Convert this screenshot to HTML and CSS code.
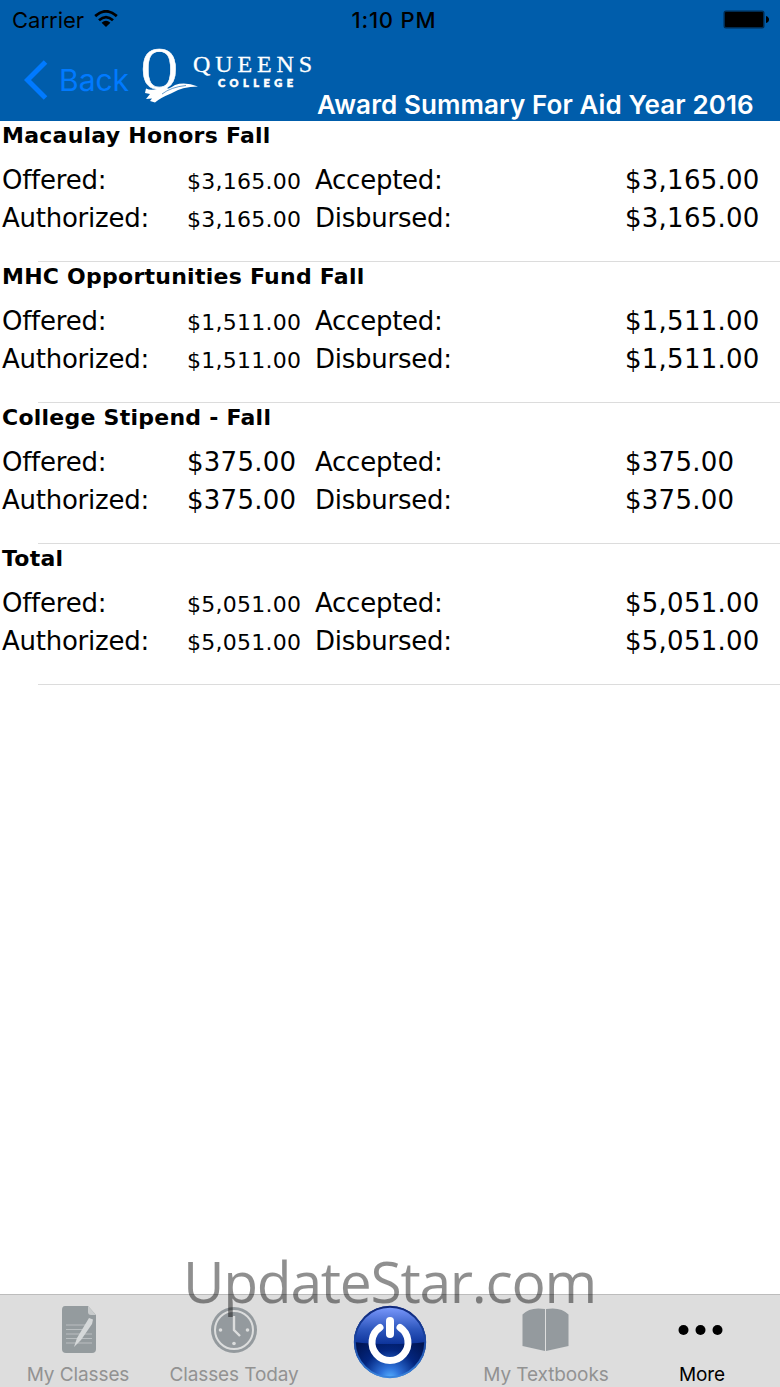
FILE: index.html
```
<!doctype html>
<html lang="en">
<head>
    <meta charset="UTF-8">
    <meta name="viewport" content="width=device-width, initial-scale=1.0">
    <link rel="stylesheet" href="styles.css">
    <title>Award Summary For Aid Year 2016</title>
</head>
<body>
    <header class="top">
        <div class="status">
            <div class="carrier">
                <span>Carrier</span>
                <svg class="wifi" width="24" height="18" viewBox="0 0 24 18">
                    <path d="M1.2 6.1Q12-3.5 22.8 6.1M5 10.2Q12 4 19 10.2" fill="none" stroke="#000" stroke-width="2.8"/>
                    <path d="M12 17L7.6 12.7Q12 9 16.4 12.7Z"/>
                </svg>
            </div>
            <div class="time">1:10 PM</div>
            <svg class="battery" width="46" height="19" viewBox="0 0 46 19">
                <rect x=".5" y=".5" width="41" height="18" rx="2.5" fill="#002b50"/>
                <rect x="2" y="2" width="38" height="15" rx="1"/>
                <path d="M43 6Q46 7 46 9.5T43 13Z"/>
            </svg>
        </div>
        <div class="nav">
            <a class="back">
                <svg width="24" height="40" viewBox="0 0 24 40">
                    <path d="M21.5 2L3.5 20L21.5 38" fill="none" stroke="#007aff" stroke-width="5"/>
                </svg>
                <span>Back</span>
            </a>
            <svg class="logo" width="180" height="70" viewBox="0 0 180 70">
                <text class="logo-q" transform="translate(-1 43.5) scale(.82 1)">Q</text>
                <path class="logo-gap" d="M16 45.5Q25 46 32 40H60V66H16Z"/>
                <path class="logo-swoosh" d="M4 43.5Q9 46 17 43.5Q25 46 33 40Q43 36.5 56 41.5Q40 41.5 29 48.5Q18 53 13 57.5L8 56L10 53.5L4 54L8 49L3 48Z"/>
                <path class="logo-line" d="M20 49Q29 42 44 40.5"/>
                <text class="logo-name" x="51" y="27" textLength="119">QUEENS</text>
                <text class="logo-sub" x="76" y="42" textLength="75">COLLEGE</text>
            </svg>
            <h1>Award Summary For Aid Year 2016</h1>
        </div>
    </header>

    <main class="awards">
        <section class="award">
            <h2>Macaulay Honors Fall</h2>
            <div class="amounts">
                <span class="label">Offered:</span><span class="small">$3,165.00</span>
                <span class="label">Accepted:</span><span>$3,165.00</span>
                <span class="label">Authorized:</span><span class="small">$3,165.00</span>
                <span class="label">Disbursed:</span><span>$3,165.00</span>
            </div>
        </section>
        <section class="award">
            <h2>MHC Opportunities Fund Fall</h2>
            <div class="amounts">
                <span class="label">Offered:</span><span class="small">$1,511.00</span>
                <span class="label">Accepted:</span><span>$1,511.00</span>
                <span class="label">Authorized:</span><span class="small">$1,511.00</span>
                <span class="label">Disbursed:</span><span>$1,511.00</span>
            </div>
        </section>
        <section class="award">
            <h2>College Stipend - Fall</h2>
            <div class="amounts">
                <span class="label">Offered:</span><span>$375.00</span>
                <span class="label">Accepted:</span><span>$375.00</span>
                <span class="label">Authorized:</span><span>$375.00</span>
                <span class="label">Disbursed:</span><span>$375.00</span>
            </div>
        </section>
        <section class="award">
            <h2>Total</h2>
            <div class="amounts">
                <span class="label">Offered:</span><span class="small">$5,051.00</span>
                <span class="label">Accepted:</span><span>$5,051.00</span>
                <span class="label">Authorized:</span><span class="small">$5,051.00</span>
                <span class="label">Disbursed:</span><span>$5,051.00</span>
            </div>
        </section>
    </main>

    <nav class="tabs">
        <a class="tab">
            <svg width="48" height="48" viewBox="0 0 48 48">
                <path d="M11 0H34L42 9V43Q42 47 38 47H12Q8 47 8 43V4Q8 0 11 0Z" fill="#949b9e"/>
                <path d="M34 0V6Q34 9 37 9H42Z" fill="#c8cbcc"/>
                <path d="M12 19H33M12 23.5H31M12 28H38M12 32.5H38M12 37H38" stroke="#b9bec0" stroke-width="1.2"/>
                <path d="M35 12L39 13.5L38 18L27 34L20 41L23 32Z" fill="#d5d8d9"/>
            </svg>
            <span>My Classes</span>
        </a>
        <a class="tab">
            <svg width="48" height="48" viewBox="0 0 48 48">
                <circle cx="24" cy="24" r="23" fill="#949a9e"/>
                <circle cx="24" cy="24" r="19" fill="none" stroke="#dcdddd" stroke-width="2"/>
                <path d="M24 10V24L30 30" fill="none" stroke="#dcdddd" stroke-width="2.4"/>
                <g fill="#dcdddd">
                    <circle cx="10.5" cy="24" r="1.8"/>
                    <circle cx="37.5" cy="24" r="1.8"/>
                    <circle cx="24" cy="37.5" r="1.8"/>
                </g>
            </svg>
            <span>Classes Today</span>
        </a>
        <a class="tab tab-power">
            <svg width="74" height="74" viewBox="0 0 74 74">
                <defs>
                    <linearGradient id="shine" x1="0" y1="0" x2="0" y2="1">
                        <stop offset="0" stop-color="#7d9dff"/>
                        <stop offset=".2" stop-color="#6485ea"/>
                        <stop offset=".6" stop-color="#2f58be"/>
                        <stop offset="1" stop-color="#0d349b"/>
                    </linearGradient>
                    <radialGradient id="glow" cx=".5" cy="1" r=".65">
                        <stop offset="0" stop-color="#55b0ff"/>
                        <stop offset=".22" stop-color="#2e72da"/>
                        <stop offset=".6" stop-color="#03267f"/>
                        <stop offset="1" stop-color="#001451"/>
                    </radialGradient>
                    <linearGradient id="rim" x1="0" y1="0" x2="0" y2="1">
                        <stop offset="0" stop-color="#10287a"/>
                        <stop offset=".5" stop-color="#1a47a4"/>
                        <stop offset="1" stop-color="#3a85dc"/>
                    </linearGradient>
                </defs>
                <circle cx="37" cy="37" r="36" fill="url(#glow)"/>
                <path d="M1 37A36 36 0 0 1 73 37Q57 39 37 39T1 37Z" fill="url(#shine)"/>
                <circle cx="37" cy="37" r="35.2" fill="none" stroke="url(#rim)" stroke-width="2"/>
                <path d="M27 22.5A18 18 0 1 0 47 22.5" fill="none" stroke="#fff" stroke-width="7" stroke-linecap="round"/>
                <path d="M37 16V29" stroke="#fff" stroke-width="8" stroke-linecap="round"/>
            </svg>
        </a>
        <a class="tab">
            <svg width="48" height="48" viewBox="0 0 48 48">
                <path d="M23 3Q8 .5 .5 8.5V40L23 45Z" fill="#949a9e"/>
                <path d="M24 3Q39 .5 46.5 8.5V40L24 45Z" fill="#949a9e"/>
            </svg>
            <span>My Textbooks</span>
        </a>
        <a class="tab active">
            <svg width="48" height="48" viewBox="0 0 48 48">
                <circle cx="5.5" cy="24" r="5"/>
                <circle cx="22.5" cy="24" r="5"/>
                <circle cx="39.5" cy="24" r="5"/>
            </svg>
            <span>More</span>
        </a>
    </nav>

    <div class="watermark">UpdateStar.com</div>
</body>
</html>
```
FILE: styles.css
```
body{
    margin: 0;
    height: 1387px;
    display: flex;
    flex-direction: column;
    position: relative;
    background: #fff;
    color: #000;
    font-family: "DejaVu Sans", Verdana, sans-serif;
}
/* header */
.top{
    height: 121px;
    background: #005dab;
    font-family: Inter, sans-serif;
}
.status{
    display: grid;
    grid-template-columns: 1fr 88px 1fr;
    align-items: center;
    height: 40px;
    padding: 0 11px 0 12px;
    font-size: 22px;
}
.carrier{
    display: flex;
    align-items: center;
    gap: 10px;
}
.wifi{
    margin-top: -2px;
}
.time{
    padding-left: 5px;
    font-weight: 500;
    letter-spacing: .8px;
    white-space: nowrap;
    text-align: center;
}
.battery{
    justify-self: end;
    margin-top: -2px;
}
.nav{
    display: flex;
    align-items: flex-start;
    height: 81px;
}
.back{
    display: flex;
    align-items: center;
    gap: 11px;
    width: 118px;
    padding-left: 24px;
    height: 79px;
    color: #007aff;
    font-size: 30px;
}
.logo{
    flex-shrink: 0;
    margin-top: 5px;
    margin-right: -5px;
    fill: #fff;
    overflow: visible;
}
.logo-q{
    font: 62px "Liberation Serif", serif;
    stroke: #fff;
    stroke-width: .6;
}
.logo-gap{
    fill: #005dab;
}
.logo-line{
    fill: none;
    stroke: #005dab;
    stroke-width: .6;
}
.logo-name{
    font: 24px "Liberation Serif", serif;
    stroke: #fff;
    stroke-width: .3;
}
.logo-sub{
    font: 900 11px Lato, sans-serif;
    stroke: #fff;
    stroke-width: .6;
}
h1{
    margin: 49px 0 0;
    font-size: 26px;
    line-height: 32px;
    font-weight: 600;
    letter-spacing: .1px;
    color: #fff;
    white-space: nowrap;
}
/* award list */
.awards{
    flex: 1;
}
.award{
    height: 141px;
    box-sizing: border-box;
    padding-left: 2px;
    background: linear-gradient(#dcdcdc, #dcdcdc) 38px 100% / 100% 1px no-repeat;
}
h2{
    margin: 0;
    font-size: 22px;
    line-height: 29px;
    font-weight: bold;
    letter-spacing: .25px;
}
.amounts{
    display: grid;
    grid-template-columns: 185px 128px 310px 1fr;
    grid-auto-rows: 38px;
    align-items: center;
    padding-top: 11px;
    font-size: 26px;
    letter-spacing: .25px;
    white-space: nowrap;
}
.label{
    letter-spacing: -.25px;
}
.small{
    padding-top: 3px;
    font-size: 22px;
}
/* tab bar */
.tabs{
    display: grid;
    grid-template-columns: repeat(5, 1fr);
    height: 93px;
    box-sizing: border-box;
    border-top: 1px solid #bcbcbc;
    background: #dddddd;
    font: 19px Inter, sans-serif;
    letter-spacing: -.1px;
    color: #929292;
}
.tab{
    display: flex;
    flex-direction: column;
    align-items: center;
    padding-top: 11px;
    white-space: nowrap;
}
.tab span{
    margin-top: 9px;
    line-height: 23px;
}
.tab-power{
    padding-top: 10px;
}
.active{
    color: #000;
}
/* stamp over the page */
.watermark{
    position: absolute;
    left: 183px;
    top: 1233px;
    font: 57px/96px "Open Sans", sans-serif;
    letter-spacing: -1.3px;
    color: rgba(0, 0, 0, .44);
    white-space: nowrap;
}
```
